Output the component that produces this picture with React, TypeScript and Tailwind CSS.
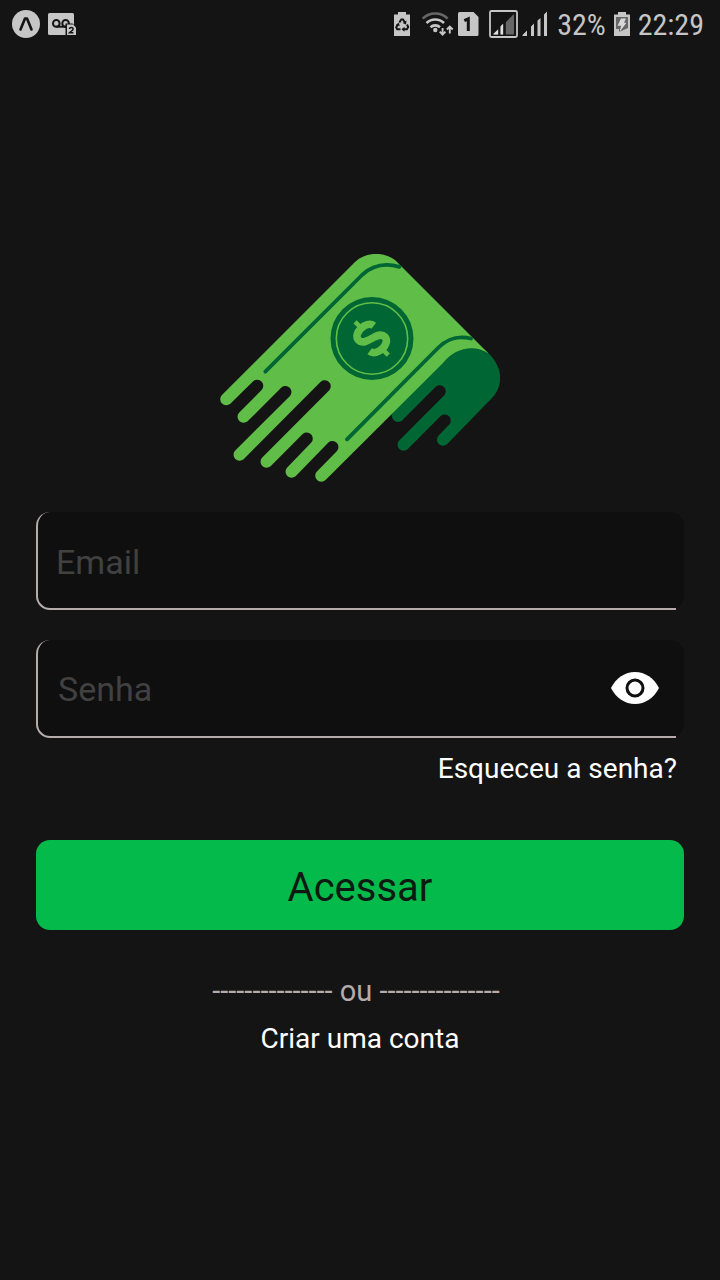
import { useState } from "react";

const FONT = "font-['Roboto','Liberation_Sans',sans-serif]";

function NotificationIcons() {
  return (
    <div className="flex items-center gap-2">
      <svg className="size-7" viewBox="0 0 28 28" aria-hidden="true">
        <circle cx="14" cy="14" r="14" fill="#c6c6c6" />
        <path d="M8.500 19.500 13 8.500h2l4.500 11" fill="none" stroke="#141414" strokeWidth="2.600" strokeLinecap="round" strokeLinejoin="round" />
      </svg>
      <svg className="size-7" viewBox="0 0 28 28" aria-hidden="true">
        <rect x="0" y="3" width="26" height="22" rx="1.500" fill="#c6c6c6" />
        <g fill="none" stroke="#141414" strokeWidth="2">
          <circle cx="8.300" cy="13.400" r="3.300" />
          <circle cx="17.600" cy="13.400" r="3.300" />
          <path d="M8.300 16.700h10" />
        </g>
        <path d="M17.500 13.500h7L28 17v9h-10.500z" fill="#141414" />
        <path d="M19 14.500h6l3 3V25h-9z" fill="#c6c6c6" />
        <path d="M21.400 19c.2-2 3.800-2 3.700.1-.1 1.300-1.900 2-3.600 3.700h3.900" fill="none" stroke="#141414" strokeWidth="1.500" />
      </svg>
    </div>
  );
}

function SystemIcons() {
  return (
    <svg className="h-8 w-[156px]" viewBox="393 8 156 32" aria-hidden="true">
      <g fill="#c6c6c6">
        <path d="M394 14.500h4V12h8v2.500h4V36h-16z" />
        <g fill="none" stroke="#141414" strokeWidth="2">
          <path d="m399.300 22.500 2-3h1.700l2 3M407 24.500l1.200 2.500-1.300 2.200H403M400.500 29.200h-3.300l-1-2 1.800-3" />
        </g>
        <path d="m406.500 20.500-.5 4-3.400-1.600zM404.500 26.700v5l-3-2.500zM396 24.500l3-1.800.6 3.600z" fill="#141414" />
      </g>
      <g fill="none" strokeWidth="2.600">
        <path d="M422.700 18.600a18 18 0 0 1 25 0" stroke="#666" />
        <path d="M426.500 23a12.500 12.500 0 0 1 17.500 0M430.500 27.200a7 7 0 0 1 9.500 0" stroke="#c6c6c6" />
      </g>
      <circle cx="435.300" cy="30" r="2.200" fill="#c6c6c6" />
      <path d="M442.600 28v6.500M439.700 31.700l2.900 3 2.900-3M449.800 33.500V26.500M446.900 29.500l2.900-3 2.900 3" fill="none" stroke="#c6c6c6" strokeWidth="1.900" />
      <path d="M459.500 12h14l5 5v17.500a1.500 1.500 0 0 1-1.500 1.500h-17.500a1.500 1.500 0 0 1-1.500-1.500v-21a1.500 1.500 0 0 1 1.500-1.500z" fill="#c6c6c6" />
      <path d="m464.300 20.700 4-1.900V31" fill="none" stroke="#141414" strokeWidth="3" />
      <rect x="490" y="11" width="27" height="26" rx="1.500" fill="none" stroke="#c6c6c6" strokeWidth="1.800" />
      <path d="M493 34.500 514 14v20.500z" fill="#666" />
      <path d="M493.500 34.500v-.8l4.800-4.500v5.300zM500.300 34.500v-8l3-3v11z" fill="#e0e0e0" />
      <path d="M498.300 23v12h2V22zM503.300 18v17h2.500V16z" fill="#141414" />
      <path d="M522.500 36v-1l4.500-4.500V36zM531 36V26.500l3-3V36zM537.500 36V20.500l3-2.500v18zM544 36V14.500l3-3V36z" fill="#c6c6c6" />
    </svg>
  );
}

function BatteryIcon() {
  return (
    <svg className="h-6 w-4" viewBox="0 0 16 24" aria-hidden="true">
      <path d="M0 2.500h4V0h8v2.500h4V24H0z" fill="#c6c6c6" />
      <path d="M2 5h12v11l-9 4V17H2z" fill="#666" />
      <path d="M7 6.500h5l-2 4.300h2.500L5.500 20l1.700-6.200H3.500z" fill="#d8d8d8" />
    </svg>
  );
}

function MoneyLogo() {
  return (
    <svg className="h-[228px] w-[280px]" viewBox="220 254 280 228" role="img" aria-label="Logo">
      <path
        fill="#006633"
        d="M430 370 446 352C458 344 474 343 485 350C504 366 504 386 491.500 398.500L447 444.300A6.100 6.100 0 0 1 438.400 435.700L449.300 424.600A6.100 6.100 0 0 0 440.700 416L407.600 449.300A6.100 6.100 0 0 1 399 440.700L444.300 395.300A6.100 6.100 0 0 0 435.700 386.700L403.300 419.300A6.100 6.100 0 0 1 393 412Z"
      />
      <path
        fill="#60bd47"
        d="M221.700 395.200 355 262C366 251.500 384 251.500 395 260L488.500 353.500C474 343.500 454 348.500 443 363L325.300 480.300A6.100 6.100 0 0 1 316.700 471.700L337 451A6.100 6.100 0 0 0 328.400 442.400L295.600 476.300A6.100 6.100 0 0 1 287 467.700L311.300 442.600A6.100 6.100 0 0 0 302.700 434L270.600 466.300A6.100 6.100 0 0 1 262 457.700L329.300 390.300A6.100 6.100 0 0 0 320.700 381.700L243.600 459.300A6.100 6.100 0 0 1 235 450.700L290 396A6.100 6.100 0 0 0 281.400 387.400L247.600 421.300A6.100 6.100 0 0 1 239 412.700L261.800 389.800A6.100 6.100 0 0 0 253.200 381.200L230.300 403.800A6.100 6.100 0 0 1 221.700 395.200Z"
      />
      <g fill="none" stroke="#006633" strokeWidth="3.800" strokeLinecap="round">
        <path d="M265.300 371.700 362 275C372 265.500 384 262.500 399.500 266.800" />
        <path d="M347 439.300 438 348C448 338 458 335.500 471 338.500" />
      </g>
      <circle cx="372" cy="338.500" r="41.500" fill="#006633" />
      <circle cx="372" cy="338.500" r="35.700" fill="none" stroke="#60bd47" strokeWidth="1.600" />
      <g transform="translate(371.700 338.500) rotate(-45)" fill="none" stroke="#60bd47">
        <path strokeWidth="7.600" d="M10.500-7.500C9-17-10.500-17-10.500-8C-10.500 2 10.500-2 10.500 8C10.500 17-9 17-10.500 7.500" />
        <path strokeWidth="4.500" d="M0-23.500v10M0 13.500v10" />
      </g>
    </svg>
  );
}

function EyeIcon() {
  return (
    <svg className="h-8 w-12" viewBox="0 0 48 32" aria-hidden="true">
      <path d="M0 16C5 6 14 0 24 0s19 6 24 16c-5 10-14 16-24 16S5 26 0 16z" fill="#fff" />
      <circle cx="24" cy="16" r="8" fill="none" stroke="#0f0f0f" strokeWidth="3" />
    </svg>
  );
}

const FIELD =
  "relative flex h-[98px] items-center rounded-[14px] bg-[#0f0f0f] pr-[25px] before:pointer-events-none before:absolute before:inset-y-0 before:left-0 before:right-2 before:rounded-l-[14px] before:border-b-2 before:border-l-2 before:border-[#b5abab]";
const INPUT =
  "min-w-0 flex-1 bg-transparent pt-0.5 text-[34px] leading-10 text-white outline-none placeholder:text-[#414141]";

export default function App() {
  const [visible, setVisible] = useState(false);

  return (
    <div className={`flex min-h-screen flex-col bg-[#141414] ${FONT}`}>
      <header className="flex h-12 items-center justify-between pl-3 pr-4 text-[30px] leading-none text-[#c6c6c6]">
        <NotificationIcons />
        <div className="flex items-center gap-2 font-['Roboto_Condensed','Roboto',sans-serif] font-stretch-condensed">
          <SystemIcons />
          <span className="pt-0.5">32%</span>
          <BatteryIcon />
          <time className="pt-0.5">22:29</time>
        </div>
      </header>

      <main className="flex flex-col px-9 pt-[206px]">
        <div className="flex justify-center">
          <MoneyLogo />
        </div>

        <form className="mt-[30px] flex flex-col" onSubmit={(e) => e.preventDefault()}>
          <div className={`pl-5 ${FIELD}`}>
            <input className={INPUT} type="email" placeholder="Email" aria-label="Email" />
          </div>
          <div className={`mt-[30px] pb-0.5 pl-[22px] ${FIELD}`}>
            <input className={INPUT} type={visible ? "text" : "password"} placeholder="Senha" aria-label="Senha" />
            <button type="button" aria-label="Mostrar senha" onClick={() => setVisible(!visible)}>
              <EyeIcon />
            </button>
          </div>
          <a href="#senha" className="mt-[13px] self-end pr-[7px] text-[28px] leading-9 text-white">
            Esqueceu a senha?
          </a>
          <button type="submit" className="mt-[53px] h-[90px] rounded-[14px] bg-[#03ba4b] pt-1.5 text-[40px] leading-none text-[#0c1a11]">
            Acessar
          </button>
        </form>

        <p className="mt-[43px] pr-2 text-center text-[29px] leading-9 text-[#b5abab]">
          --------------- ou ---------------
        </p>
        <a href="#conta" className="mt-3 self-center text-[28px] leading-9 text-white">
          Criar uma conta
        </a>
      </main>
    </div>
  );
}
